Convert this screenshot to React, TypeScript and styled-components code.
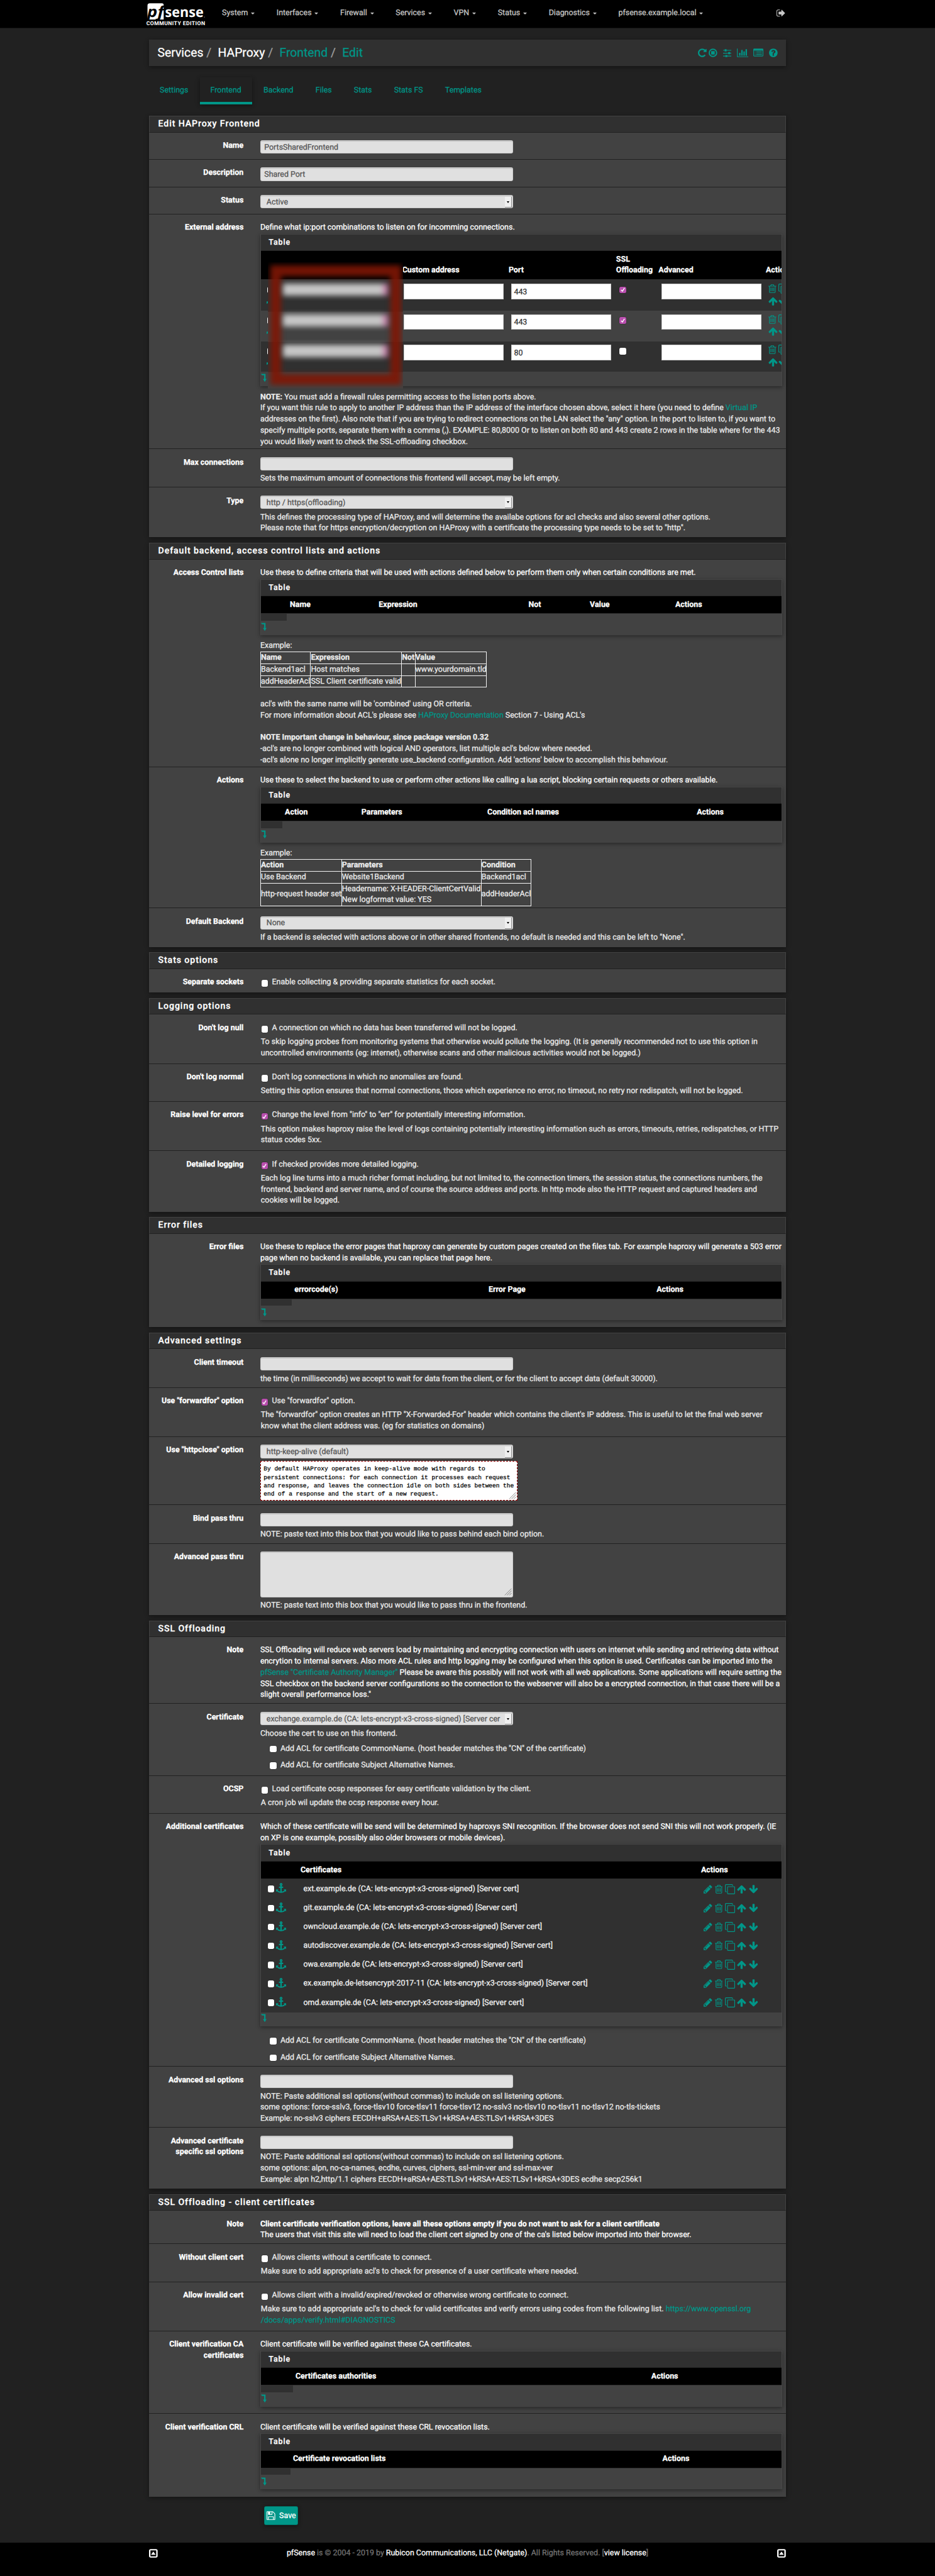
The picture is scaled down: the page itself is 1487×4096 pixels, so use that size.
import React from "react";
import styled, { createGlobalStyle, css } from "styled-components";

const color = {
  page: "#212121",
  panel: "#424242",
  head: "#303030",
  teal: "#009688",
  line: "#212121",
  help: "#ebebeb",
};

const GlobalStyle = createGlobalStyle`
  * { box-sizing: border-box; }
  body { margin: 0; background: #000; overflow-x: hidden; }
`;

const Page = styled.div`
  zoom: 0.8883;
  width: 1674px;
  height: 4611px;
  display: flex;
  flex-direction: column;
  background: ${color.page};
  color: #fff;
  font: 400 14px/20px Roboto, "Liberation Sans", sans-serif;
  -webkit-text-stroke: 0.3px currentColor;
  text-rendering: geometricPrecision;
  white-space: nowrap;
  overflow: hidden;
`;

/* ---------- icons ---------- */

type IconName =
  | "trash" | "up" | "down" | "pencil" | "sliders" | "repeat" | "chart" | "list"
  | "help" | "signout" | "clone" | "anchor" | "stop" | "floppy" | "caretbox";

const ICONS: Record<IconName, { x: number; w: number; d: string }> = {
  trash: { x: 192, w: 1408, d: "M704 736v576q0 14-9 23t-23 9h-64q-14 0-23-9t-9-23v-576q0-14 9-23t23-9h64q14 0 23 9t9 23zm256 0v576q0 14-9 23t-23 9h-64q-14 0-23-9t-9-23v-576q0-14 9-23t23-9h64q14 0 23 9t9 23zm256 0v576q0 14-9 23t-23 9h-64q-14 0-23-9t-9-23v-576q0-14 9-23t23-9h64q14 0 23 9t9 23zm128 724v-948h-896v948q0 22 7 40.5t14.5 27 10.5 8.5h832q3 0 10.5-8.5t14.5-27 7-40.5zm-672-1076h448l-48-117q-7-9-17-11h-317q-10 2-17 11zm928 32v64q0 14-9 23t-23 9h-96v948q0 83-47 143.5t-113 60.5h-832q-66 0-113-58.5t-47-141.5v-952h-96q-14 0-23-9t-9-23v-64q0-14 9-23t23-9h309l70-167q15-37 54-63t79-26h320q40 0 79 26t54 63l70 167h309q14 0 23 9t9 23z" },
  up: { x: 64, w: 1664, d: "M1675 971q0 51-37 90l-75 75q-38 38-91 38-54 0-90-38l-294-293v704q0 52-37.5 84.5t-90.5 32.5h-128q-53 0-90.5-32.5t-37.5-84.5v-704l-294 293q-36 38-90 38t-90-38l-75-75q-38-38-38-90 0-53 38-91l651-651q35-37 90-37 54 0 91 37l651 651q37 39 37 91z" },
  down: { x: 64, w: 1664, d: "M1675 832q0 53-37 90l-651 652q-39 37-91 37-53 0-90-37l-651-652q-38-36-38-90 0-53 38-91l74-75q39-37 91-37 53 0 90 37l294 294v-704q0-52 38-90t90-38h128q52 0 90 38t38 90v704l294-294q37-37 90-37 52 0 91 37l75 75q37 39 37 91z" },
  pencil: { x: 128, w: 1536, d: "M491 1536l91-91-235-235-91 91v107h128v128h107zm523-928q0-22-22-22-10 0-17 7l-542 542q-7 7-7 17 0 22 22 22 10 0 17-7l542-542q7-7 7-17zm-54-192l416 416-832 832h-416v-416zm683 96q0 53-37 90l-166 166-416-416 166-165q36-38 90-38 53 0 91 38l235 234q37 39 37 91z" },
  sliders: { x: 128, w: 1536, d: "M480 1408v128h-352v-128h352zm352-128q26 0 45 19t19 45v256q0 26-19 45t-45 19h-256q-26 0-45-19t-19-45v-256q0-26 19-45t45-19h256zm160-384v128h-864v-128h864zm-640-512v128h-224v-128h224zm1312 1024v128h-736v-128h736zm-960-1152q26 0 45 19t19 45v256q0 26-19 45t-45 19h-256q-26 0-45-19t-19-45v-256q0-26 19-45t45-19h256zm640 512q26 0 45 19t19 45v256q0 26-19 45t-45 19h-256q-26 0-45-19t-19-45v-256q0-26 19-45t45-19h256zm320 128v128h-224v-128h224zm0-512v128h-864v-128h864z" },
  repeat: { x: 128, w: 1536, d: "M1664 256v448q0 26-19 45t-45 19h-448q-42 0-59-40-17-39 14-69l138-138q-148-137-349-137-104 0-198.5 40.5t-163.5 109.5-109.5 163.5-40.5 198.5 40.5 198.5 109.5 163.5 163.5 109.5 198.5 40.5q119 0 225-52t179-147q7-10 23-12 15 0 25 9l137 138q9 8 9.5 20.5t-7.5 22.5q-109 132-264 204.5t-327 72.5q-156 0-298-61t-245-164-164-245-61-298 61-298 164-245 245-164 298-61q147 0 284.5 55.5t244.5 156.5l130-129q29-31 70-14 39 17 39 59z" },
  chart: { x: 0, w: 2048, d: "M640 896v512h-256v-512h256zm384-512v1024h-256v-1024h256zm1024 1152v128h-2048v-1536h128v1408h1920zm-640-896v768h-256v-768h256zm384-384v1152h-256v-1152h256z" },
  list: { x: 0, w: 1792, d: "M256 1120h128v128h-128zM256 864h128v128h-128zM256 608h128v128h-128zM512 1120h1024v128h-1024zM512 864h1024v128h-1024zM512 608h1024v128h-1024zM160 128h1472q66 0 113 47t47 113v1088q0 66-47 113t-113 47h-1472q-66 0-113-47t-47-113v-1088q0-66 47-113t113-47zM128 512v864q0 32 32 32h1472q32 0 32-32v-864z" },
  help: { x: 128, w: 1536, d: "M1024 1376v-192q0-14-9-23t-23-9h-192q-14 0-23 9t-9 23v192q0 14 9 23t23 9h192q14 0 23-9t9-23zm256-672q0-88-55.5-163t-138.5-116-170-41q-243 0-371 213-15 24 8 42l132 100q7 6 19 6 16 0 25-12 53-68 86-92 34-24 86-24 48 0 85.5 26t37.5 59q0 38-20 61t-68 45q-63 28-115.5 86.5t-52.5 125.5v36q0 14 9 23t23 9h192q14 0 23-9t9-23q0-19 21.5-49.5t54.5-49.5q32-18 49-28.5t46-35 44.5-48 28-60.5 12.5-81zm384 192q0 209-103 385.5t-279.5 279.5-385.5 103-385.5-103-279.5-279.5-103-385.5 103-385.5 279.5-279.5 385.5-103 385.5 103 279.5 279.5 103 385.5z" },
  signout: { x: 80, w: 1600, d: "M704 1440q0 4 1 20t.5 26.5-3 23.5-10 19.5-20.5 6.5h-320q-119 0-203.5-84.5t-84.5-203.5v-704q0-119 84.5-203.5t203.5-84.5h320q13 0 22.5 9.5t9.5 22.5q0 4 1 20t.5 26.5-3 23.5-10 19.5-20.5 6.5h-320q-66 0-113 47t-47 113v704q0 66 47 113t113 47h312l11.5 1 11.5 3 8 5.5 7 9 2 13.5zm928-544q0 26-19 45l-544 544q-19 19-45 19t-45-19-19-45v-288h-448q-26 0-45-19t-19-45v-384q0-26 19-45t45-19h448v-288q0-26 19-45t45-19 45 19l544 544q19 19 19 45z" },
  clone: { x: 0, w: 1792, d: "M1664 1632v-1088q0-13-9.5-22.5t-22.5-9.5h-1088q-13 0-22.5 9.5t-9.5 22.5v1088q0 13 9.5 22.5t22.5 9.5h1088q13 0 22.5-9.5t9.5-22.5zm128-1088v1088q0 66-47 113t-113 47h-1088q-66 0-113-47t-47-113v-1088q0-66 47-113t113-47h1088q66 0 113 47t47 113zm-384-384v160h-128v-160q0-13-9.5-22.5t-22.5-9.5h-1088q-13 0-22.5 9.5t-9.5 22.5v1088q0 13 9.5 22.5t22.5 9.5h160v128h-160q-66 0-113-47t-47-113v-1088q0-66 47-113t113-47h1088q66 0 113 47t47 113z" },
  anchor: { x: 0, w: 1792, d: "M960 256q0-26-19-45t-45-19-45 19-19 45 19 45 45 19 45-19 19-45zm832 928v352q0 22-20 30-8 2-12 2-12 0-23-9l-93-93q-119 143-318.5 226.5t-429.5 83.5-429.5-83.5-318.5-226.5l-93 93q-9 9-23 9-4 0-12-2-20-8-20-30v-352q0-14 9-23t23-9h352q22 0 30 20 8 19-7 35l-100 100q67 91 189.5 153.5t271.5 82.5v-647h-192q-26 0-45-19t-19-45v-128q0-26 19-45t45-19h192v-163q-58-34-93-92.5t-35-128.5q0-106 75-181t181-75 181 75 75 181q0 70-35 128.5t-93 92.5v163h192q26 0 45 19t19 45v128q0 26-19 45t-45 19h-192v647q149-20 271.5-82.5t189.5-153.5l-100-100q-15-16-7-35 8-20 30-20h352q14 0 23 9t9 23z" },
  stop: { x: 128, w: 1536, d: "M576 576h640v640h-640zM896 352a544 544 0 1 0 0 1088a544 544 0 1 0 0-1088zM896 128a768 768 0 1 1 0 1536a768 768 0 1 1 0-1536z" },
  floppy: { x: 128, w: 1536, d: "M512 1536h768v-384h-768v384zm896 0h128v-896q0-14-10-38.5t-20-34.5l-281-281q-10-10-34-20t-39-10v416q0 40-28 68t-68 28h-576q-40 0-68-28t-28-68v-416h-128v1280h128v-416q0-40 28-68t68-28h832q40 0 68 28t28 68v416zm-384-928v-320q0-13-9.5-22.5t-22.5-9.5h-192q-13 0-22.5 9.5t-9.5 22.5v320q0 13 9.5 22.5t22.5 9.5h192q13 0 22.5-9.5t9.5-22.5zm640 32v928q0 40-28 68t-68 28h-1344q-40 0-68-28t-28-68v-1344q0-40 28-68t68-28h928q40 0 88 20t76 48l280 280q28 28 48 76t20 88z" },
  caretbox: { x: 128, w: 1536, d: "M1240 1140h-688q-60 0-30-60l344-460q30-36 60 0l344 460q30 60-30 60zM384 352v1088h1024v-1088zM416 128h960q120 0 204 84t84 204v960q0 120-84 204t-204 84h-960q-120 0-204-84t-84-204v-960q0-120 84-204t204-84z" },
};

const Svg = styled.svg`
  display: block;
  flex: none;
  fill: currentColor;
`;

const Icon = ({ name, size = 18 }: { name: IconName; size?: number }) => {
  const i = ICONS[name];
  return (
    <Svg width={(i.w / 1792) * size} height={size} viewBox={`${i.x} 0 ${i.w} 1792`} fillRule="evenodd">
      <path d={i.d} />
    </Svg>
  );
};

const AddSvg = styled(Svg)`
  color: ${color.teal};
  margin-top: 3px;
`;
const AddRow = () => (
  <AddSvg width="10" height="15" viewBox="0 0 10 15">
    <path d="M0 .5H8.2V9.5H10.2L6.9 15 3.6 9.5H5.7V3H1.9Z" />
  </AddSvg>
);

/* ---------- top bar ---------- */

const Navbar = styled.header`
  height: 51px;
  flex: none;
  background: #000;
  border-bottom: 1px solid #101010;
  padding: 0 268px 3px 260px;
  display: flex;
  align-items: center;
  color: #c6c6c6;
`;
const Logo = styled.svg`
  display: block;
  width: 117px;
  height: 50px;
  margin-bottom: -3px;
  flex: none;
`;
const NavItem = styled.a`
  display: flex;
  align-items: center;
  padding: 0 19.5px;
  &:first-of-type { margin-left: 1px; }
  &::after {
    content: "";
    margin-left: 5.5px;
    border: 4px solid transparent;
    border-top-color: currentColor;
    border-bottom: 0;
    margin-top: 1px;
  }
`;
const Push = styled.div`
  margin-left: auto;
`;

const Container = styled.main`
  width: 1140px;
  margin-left: 267px;
  flex: 1;
  display: flex;
  flex-direction: column;
`;

const shadow = css`
  box-shadow: 0 2px 5px rgba(0, 0, 0, 0.26), 0 2px 10px rgba(0, 0, 0, 0.16);
`;

const Breadcrumb = styled.div`
  margin-top: 20px;
  height: 47px;
  flex: none;
  background: ${color.head};
  ${shadow}
  padding: 0 15px;
  display: flex;
  align-items: center;
  font-size: 21.8px;
`;
const Crumb = styled.span<{ $link?: boolean }>`
  color: ${(p) => (p.$link ? color.teal : "#fff")};
  &:not(:last-of-type)::after {
    content: "/";
    color: #9e9e9e;
    padding: 0 11.5px 0 5.5px;
  }
`;
const Shortcuts = styled.div`
  margin-left: auto;
  display: flex;
  gap: 9.5px;
  color: ${color.teal};
  svg:first-child { margin-right: -5.5px; }
`;

const Tabs = styled.nav`
  margin: 20px 0 20px;
  display: flex;
  gap: 1.6px;
  flex: none;
`;
const Tab = styled.a<{ $active?: boolean }>`
  height: 49px;
  padding: 14px 19px 0;
  color: ${color.teal};
  ${(p) => p.$active && css`border-bottom: 5px solid ${color.teal}; ${shadow}`}
`;

/* ---------- panels ---------- */

const Panel = styled.section`
  background: ${color.panel};
  ${shadow}
  margin-bottom: 10px;
  flex: none;
`;
const PanelHead = styled.h2<{ $h?: number }>`
  margin: 0;
  height: ${(p) => p.$h ?? 30}px;
  background: ${color.head};
  border: 1px solid #424242;
  border-bottom: 1px solid ${color.line};
  padding: 4.5px 15px 0;
  font-size: 16px;
  font-weight: 500;
  letter-spacing: 1px;
`;
const Row = styled.div<{ $h: number }>`
  height: ${(p) => p.$h}px;
  display: flex;
  border-bottom: 1px solid ${color.line};
  &:last-child { border-bottom: 0; }
`;
const Label = styled.label`
  width: 190px;
  padding: 14px 21px 0 0;
  text-align: right;
  font-weight: 700;
`;
const Field = styled.div`
  width: 950px;
  padding: 14px 6px 0 9px;
`;
const Text = styled.div``;
const Help = styled.div<{ $top?: number; $left?: number }>`
  color: ${color.help};
  margin-top: ${(p) => p.$top ?? 5}px;
  margin-left: ${(p) => p.$left ?? 0}px;
`;
const Link = styled.a`
  color: ${color.teal};
`;
const FormInput = styled.div<{ $h?: number; $select?: boolean }>`
  width: 453px;
  height: ${(p) => p.$h ?? 24}px;
  background: #e0e0e0;
  border: 1px solid #ccc;
  border-radius: 3px;
  box-shadow: inset 0 1px 1px rgba(0, 0, 0, 0.14);
  color: #555;
  padding: 2px ${(p) => (p.$select ? "1px 0 10px" : "0 0 6px")};
  display: flex;
  justify-content: space-between;
  align-items: ${(p) => (p.$h ? "flex-end" : "flex-start")};
  line-height: 20px;
`;
const SelectText = styled.span`
  width: 421px;
  overflow: hidden;
`;
const SelectButton = styled.span`
  width: 13px;
  height: 20px;
  background: #efefef;
  border: solid #8d8d8d;
  border-width: 0 2px 2px 0;
  display: flex;
  align-items: center;
  justify-content: center;
  &::after {
    content: "";
    border: 2.5px solid transparent;
    border-top: 3.5px solid #000;
    border-bottom: 0;
  }
`;
const Select = ({ children }: { children: React.ReactNode }) => (
  <FormInput $select>
    <SelectText>{children}</SelectText>
    <SelectButton />
  </FormInput>
);

const Box = styled.span<{ $on?: boolean }>`
  width: 12px;
  height: 12px;
  flex: none;
  border-radius: 3px;
  background: ${(p) => (p.$on ? "#b94fae" : "#fff")};
  box-shadow: 0 0 0 0.5px rgba(0, 0, 0, 0.35);
  display: flex;
  align-items: center;
  justify-content: center;
`;
const CheckMark = styled.svg`
  width: 8px;
  height: 8px;
  fill: none;
  stroke: #fff;
  stroke-width: 1.6;
`;
const Checkbox = ({ on }: { on?: boolean }) => (
  <Box $on={on}>
    {on && (
      <CheckMark viewBox="0 0 8 8">
        <path d="M1 4.6L3.2 6.8L7 1" />
      </CheckMark>
    )}
  </Box>
);
const CheckLine = styled.div<{ $sub?: boolean }>`
  display: flex;
  align-items: center;
  gap: 7px;
  color: ${color.help};
  ${(p) => (p.$sub ? "padding: 7px 0 3px 17px;" : "padding-left: 2px;")}
  ${Box} { margin-top: ${(p) => (p.$sub ? 1 : 4)}px; }
`;
const Check = ({ on, sub, children }: { on?: boolean; sub?: boolean; children: React.ReactNode }) => (
  <CheckLine $sub={sub}>
    <Checkbox on={on} />
    <span>{children}</span>
  </CheckLine>
);

/* ---------- inner tables ---------- */

const TablePanel = styled.div<{ $after?: number }>`
  position: relative;
  width: 935px;
  margin: 0.5px 0 ${(p) => p.$after ?? 9}px;
  background: ${color.panel};
  border: solid #484848;
  border-width: 0 1px;
  box-shadow: 0 2px 5px rgba(0, 0, 0, 0.26), 0 2px 10px rgba(0, 0, 0, 0.16);
`;
const TableTitle = styled.div`
  height: 31px;
  background: ${color.head};
  border-bottom: 1px solid #262626;
  border-top: 1px solid #444;
  padding: 5px 15px 0 14px;
  font-weight: 500;
  letter-spacing: 1px;
`;
const HeadRow = styled.div<{ $cols: string; $h?: number }>`
  display: grid;
  grid-template-columns: ${(p) => p.$cols};
  align-items: end;
  height: ${(p) => p.$h ?? 30.5}px;
  padding-bottom: 5px;
  background: #000;
  font-weight: 700;
  overflow: hidden;
`;
const EmptyRow = styled.div<{ $w: number }>`
  height: 14px;
  border-top: 2px solid #303030;
  &::after {
    content: "";
    display: block;
    width: ${(p) => p.$w}px;
    height: 12px;
    background: #303030;
  }
`;
const AddArea = styled.div`
  height: 22px;
`;

const EmptyTable = ({ cols, heads, stub, after }: { cols: string; heads: string[]; stub: number; after?: number }) => (
  <TablePanel $after={after}>
    <TableTitle>Table</TableTitle>
    <HeadRow $cols={cols}>
      <span />
      {heads.map((h) => (
        <span key={h}>{h}</span>
      ))}
    </HeadRow>
    <EmptyRow $w={stub} />
    <AddArea>
      <AddRow />
    </AddArea>
  </TablePanel>
);

const Example = styled.table<{ $w: number }>`
  width: ${(p) => p.$w}px;
  border-collapse: collapse;
  table-layout: fixed;
  margin-top: 0.5px;
  margin-bottom: 20px;
  td, th {
    border: 1px solid #f4f4f4;
    padding: 0;
    text-align: left;
    height: 21px;
    line-height: 20px;
  }
`;
const Col = styled.col<{ $w: number }>`
  width: ${(p) => p.$w}px;
`;

const AddressRow = styled.div<{ $h: number; $dark?: boolean }>`
  display: grid;
  grid-template-columns: 256px 192px 194px 75px 192px 24px;
  height: ${(p) => p.$h}px;
  padding-top: ${(p) => p.$h - 48.5}px;
  background: ${(p) => (p.$dark ? "#303030" : "#424242")};
  overflow: hidden;
`;
const CellInput = styled.span`
  width: 179px;
  height: 28px;
  background: #fff;
  border: 1px solid #ccc;
  color: #333;
  padding: 4px;
  line-height: 20px;
`;
const LeadCell = styled.span`
  padding: 5px 0 0 11px;
  color: ${color.teal};
  svg { margin: 3px 0 0 -1px; }
`;
const CheckCell = styled.span`
  padding: 5px 0 0;
`;
const RowActions = styled.span`
  display: grid;
  grid-template-columns: 18px 20px;
  grid-template-rows: 18px 18px;
  row-gap: 4px;
  color: ${color.teal};
  svg:nth-child(even) { margin-left: 0; }
`;

const Redaction = styled.div`
  position: absolute;
  left: 13px;
  top: 51px;
  width: 241px;
  height: 226px;
  overflow: hidden;
  background: linear-gradient(#000 30px, #303030 31px 88px, #424242 89px 142px, #303030 143px 196px, #424242 197px);
`;
const RedFrame = styled.div`
  position: absolute;
  inset: 6px 3px 7px 4px;
  border: 20px solid rgba(128, 22, 4, 0.9);
  filter: blur(5px);
`;
const BlurredName = styled.div<{ $y: number }>`
  position: absolute;
  left: 27px;
  top: ${(p) => p.$y}px;
  width: 188px;
  height: 22px;
  background: linear-gradient(90deg, #c6c6c6 94%, #c47aa4 97%);
  filter: blur(5px);
`;

const CertRow = styled.div`
  display: flex;
  align-items: center;
  height: 33.9px;
  padding-left: 12px;
  background: #303030;
  color: #f2f2f2;
  svg { color: ${color.teal}; }
`;
const CertName = styled.span`
  margin-left: 31px;
  width: 717px;
`;
const CertActions = styled.span`
  display: flex;
  gap: 4px;
`;
const AnchorSlot = styled.span`
  margin-left: 3px;
  svg { margin-top: -3px; }
`;
const HeadLine = styled.div`
  height: 2px;
  background: #303030;
`;

const Hint = styled.div`
  width: 461px;
  height: 71px;
  margin-top: 5px;
  background: #fff;
  border: 1px dashed #900;
  color: #000;
  font: 400 10.67px/15px "Liberation Mono", monospace;
  padding: 6px 0 0 5px;
  display: flex;
  justify-content: space-between;
`;
const Grip = styled.svg`
  width: 14px;
  height: 14px;
  stroke: #777;
  fill: none;
  align-self: flex-end;
  margin: 0 1px 1px -14px;
`;
const ResizeGrip = () => (
  <Grip viewBox="0 0 14 14">
    <path d="M1 13L13 1M5 13L13 5M9 13L13 9" />
  </Grip>
);

const SaveButton = styled.button`
  margin: 7px 0 0 205.5px;
  width: 61.5px;
  height: 33.5px;
  border: 1px solid #00796b;
  border-radius: 3px;
  background: ${color.teal};
  color: #fff;
  font: inherit;
  padding: 0 3px 0 4px;
  display: flex;
  align-items: center;
  justify-content: space-between;
  ${shadow}
`;

const Footer = styled.footer`
  height: 60px;
  flex: none;
  background: #000;
  color: #757575;
  padding: 9px 267px 0;
  display: flex;
  align-items: flex-start;
  justify-content: space-between;
  svg { color: #fff; margin-top: 1px; }
  b { color: #fff; font-weight: 400; }
`;

const NAV = ["System", "Interfaces", "Firewall", "Services", "VPN", "Status", "Diagnostics", "pfsense.example.local"];
const TABS = ["Settings", "Frontend", "Backend", "Files", "Stats", "Stats FS", "Templates"];
const ADDRESSES = [
  { port: "443", ssl: true, h: 57 },
  { port: "443", ssl: true, h: 54.5 },
  { port: "80", ssl: false, h: 55 },
];
const CERTS = ["ext.example.de", "git.example.de", "owncloud.example.de", "autodiscover.example.de", "owa.example.de", "ex.example.de-letsencrypt-2017-11", "omd.example.de"];

const AclChecks = () => (
  <>
    <Check sub>Add ACL for certificate CommonName. (host header matches the "CN" of the certificate)</Check>
    <Check sub>Add ACL for certificate Subject Alternative Names.</Check>
  </>
);

export default function App() {
  return (
    <Page>
      <GlobalStyle />
      <Navbar>
        <Logo viewBox="0 0 117 50">
          <path d="M8 6H30Q33 6 33 9V35H4V10Q4 6 8 6Z" fill="#fff" />
          <text x="3.5" y="30.5" fontFamily="Open Sans" fontWeight="700" fontStyle="italic" fontSize="27" textLength="30" lengthAdjust="spacingAndGlyphs" fill="#000">pf</text>
          <text x="35.5" y="30.5" fontFamily="Open Sans" fontWeight="700" fontSize="25" textLength="69" lengthAdjust="spacingAndGlyphs" fill="#fff">sense</text>
          <text x="2" y="45" fontFamily="Roboto" fontWeight="700" fontSize="9.8" textLength="105" fill="#fff">COMMUNITY EDITION</text>
          <circle cx="106" cy="30.5" r="0.8" fill="#999" />
        </Logo>
        {NAV.map((n) => (
          <NavItem key={n}>{n}</NavItem>
        ))}
        <Push>
          <Icon name="signout" size={17.5} />
        </Push>
      </Navbar>

      <Container>
        <Breadcrumb>
          <Crumb>Services</Crumb>
          <Crumb>HAProxy</Crumb>
          <Crumb $link>Frontend</Crumb>
          <Crumb $link>Edit</Crumb>
          <Shortcuts>
            <Icon name="repeat" />
            <Icon name="stop" />
            <Icon name="sliders" />
            <Icon name="chart" />
            <Icon name="list" />
            <Icon name="help" />
          </Shortcuts>
        </Breadcrumb>

        <Tabs>
          {TABS.map((t) => (
            <Tab key={t} $active={t === "Frontend"}>{t}</Tab>
          ))}
        </Tabs>

        <Panel>
          <PanelHead>Edit HAProxy Frontend</PanelHead>
          <Row $h={49}>
            <Label>Name</Label>
            <Field><FormInput>PortsSharedFrontend</FormInput></Field>
          </Row>
          <Row $h={49}>
            <Label>Description</Label>
            <Field><FormInput>Shared Port</FormInput></Field>
          </Row>
          <Row $h={49}>
            <Label>Status</Label>
            <Field><Select>Active</Select></Field>
          </Row>
          <Row $h={420}>
            <Label>External address</Label>
            <Field>
              <Text>Define what ip:port combinations to listen on for incomming connections.</Text>
              <TablePanel $after={10}>
                <TableTitle>Table</TableTitle>
                <HeadRow $cols="253px 190.5px 192.5px 76px 192px 29px" $h={50}>
                  <span />
                  <span>Custom address</span>
                  <span>Port</span>
                  <span>SSL<br />Offloading</span>
                  <span>Advanced</span>
                  <span>Actions</span>
                </HeadRow>
                {ADDRESSES.map((a, i) => (
                  <AddressRow key={i} $h={a.h} $dark={i !== 1}>
                    <LeadCell>
                      <Checkbox />
                      <Icon name="anchor" />
                    </LeadCell>
                    <CellInput />
                    <CellInput>{a.port}</CellInput>
                    <CheckCell><Checkbox on={a.ssl} /></CheckCell>
                    <CellInput />
                    <RowActions>
                      <Icon name="trash" />
                      <Icon name="clone" />
                      <Icon name="up" />
                      <Icon name="down" />
                    </RowActions>
                  </AddressRow>
                ))}
                <AddArea><AddRow /></AddArea>
                <Redaction>
                  <RedFrame />
                  <BlurredName $y={38} />
                  <BlurredName $y={93} />
                  <BlurredName $y={148} />
                </Redaction>
              </TablePanel>
              <Help $top={0}>
                <b>NOTE:</b> You must add a firewall rules permitting access to the listen ports above.<br />
                If you want this rule to apply to another IP address than the IP address of the interface chosen above, select it here (you need to define <Link>Virtual IP</Link><br />
                addresses on the first). Also note that if you are trying to redirect connections on the LAN select the "any" option. In the port to listen to, if you want to<br />
                specify multiple ports, separate them with a comma (,). EXAMPLE: 80,8000 Or to listen on both 80 and 443 create 2 rows in the table where for the 443<br />
                you would likely want to check the SSL-offloading checkbox.
              </Help>
            </Field>
          </Row>
          <Row $h={69}>
            <Label>Max connections</Label>
            <Field>
              <FormInput />
              <Help>Sets the maximum amount of connections this frontend will accept, may be left empty.</Help>
            </Field>
          </Row>
          <Row $h={89}>
            <Label>Type</Label>
            <Field>
              <Select>http / https(offloading)</Select>
              <Help>
                This defines the processing type of HAProxy, and will determine the availabe options for acl checks and also several other options.<br />
                Please note that for https encryption/decryption on HAProxy with a certificate the processing type needs to be set to "http".
              </Help>
            </Field>
          </Row>
        </Panel>

        <Panel>
          <PanelHead>Default backend, access control lists and actions</PanelHead>
          <Row $h={371.5}>
            <Label>Access Control lists</Label>
            <Field>
              <Text>Use these to define criteria that will be used with actions defined below to perform them only when certain conditions are met.</Text>
              <EmptyTable cols="52px 159px 268px 110px 153px 1fr" heads={["Name", "Expression", "Not", "Value", "Actions"]} stub={46.5} />
              <Help $top={0}>
                Example:
                <Example $w={405}>
                  <colgroup><Col $w={89.5} /><Col $w={163} /><Col $w={24} /><Col $w={128} /></colgroup>
                  <tbody>
                    <tr><th>Name</th><th>Expression</th><th>Not</th><th>Value</th></tr>
                    <tr><td>Backend1acl</td><td>Host matches</td><td /><td>www.yourdomain.tld</td></tr>
                    <tr><td>addHeaderAcl</td><td>SSL Client certificate valid</td><td /><td /></tr>
                  </tbody>
                </Example>
                acl's with the same name will be 'combined' using OR criteria.<br />
                For more information about ACL's please see <Link>HAProxy Documentation</Link> Section 7 - Using ACL's<br />
                <br />
                <b>NOTE Important change in behaviour, since package version 0.32</b><br />
                -acl's are no longer combined with logical AND operators, list multiple acl's below where needed.<br />
                -acl's alone no longer implicitly generate use_backend configuration. Add 'actions' below to accomplish this behaviour.
              </Help>
            </Field>
          </Row>
          <Row $h={252.5}>
            <Label>Actions</Label>
            <Field>
              <Text>Use these to select the backend to use or perform other actions like calling a lua script, blocking certain requests or others available.</Text>
              <EmptyTable cols="43px 137px 225.5px 375px 1fr" heads={["Action", "Parameters", "Condition acl names", "Actions"]} stub={38} />
              <Help $top={0}>
                Example:
                <Example $w={485}>
                  <colgroup><Col $w={145} /><Col $w={250} /><Col $w={89} /></colgroup>
                  <tbody>
                    <tr><th>Action</th><th>Parameters</th><th>Condition</th></tr>
                    <tr><td>Use Backend</td><td>Website1Backend</td><td>Backend1acl</td></tr>
                    <tr><td>http-request header set</td><td>Headername: X-HEADER-ClientCertValid<br />New logformat value: YES</td><td>addHeaderAcl</td></tr>
                  </tbody>
                </Example>
              </Help>
            </Field>
          </Row>
          <Row $h={69}>
            <Label>Default Backend</Label>
            <Field>
              <Select>None</Select>
              <Help>If a backend is selected with actions above or in other shared frontends, no default is needed and this can be left to "None".</Help>
            </Field>
          </Row>
        </Panel>

        <Panel>
          <PanelHead $h={29.5}>Stats options</PanelHead>
          <Row $h={42.5}>
            <Label>Separate sockets</Label>
            <Field><Check>Enable collecting &amp; providing separate statistics for each socket.</Check></Field>
          </Row>
        </Panel>

        <Panel>
          <PanelHead $h={29.5}>Logging options</PanelHead>
          <Row $h={88}>
            <Label>Don't log null</Label>
            <Field>
              <Check>A connection on which no data has been transferred will not be logged.</Check>
              <Help $left={1}>
                To skip logging probes from monitoring systems that otherwise would pollute the logging. (It is generally recommended not to use this option in<br />
                uncontrolled environments (eg: internet), otherwise scans and other malicious activities would not be logged.)
              </Help>
            </Field>
          </Row>
          <Row $h={68}>
            <Label>Don't log normal</Label>
            <Field>
              <Check>Don't log connections in which no anomalies are found.</Check>
              <Help $left={1}>Setting this option ensures that normal connections, those which experience no error, no timeout, no retry nor redispatch, will not be logged.</Help>
            </Field>
          </Row>
          <Row $h={88}>
            <Label>Raise level for errors</Label>
            <Field>
              <Check on>Change the level from "info" to "err" for potentially interesting information.</Check>
              <Help $left={1}>
                This option makes haproxy raise the level of logs containing potentially interesting information such as errors, timeouts, retries, redispatches, or HTTP<br />
                status codes 5xx.
              </Help>
            </Field>
          </Row>
          <Row $h={108.5}>
            <Label>Detailed logging</Label>
            <Field>
              <Check on>If checked provides more detailed logging.</Check>
              <Help $left={1}>
                Each log line turns into a much richer format including, but not limited to, the connection timers, the session status, the connections numbers, the<br />
                frontend, backend and server name, and of course the source address and ports. In http mode also the HTTP request and captured headers and<br />
                cookies will be logged.
              </Help>
            </Field>
          </Row>
        </Panel>

        <Panel>
          <PanelHead $h={29.5}>Error files</PanelHead>
          <Row $h={167.5}>
            <Label>Error files</Label>
            <Field>
              <Text>
                Use these to replace the error pages that haproxy can generate by custom pages created on the files tab. For example haproxy will generate a 503 error<br />
                page when no backend is available, you can replace that page here.
              </Text>
              <EmptyTable cols="60px 347.5px 301px 1fr" heads={["errorcode(s)", "Error Page", "Actions"]} stub={55} />
            </Field>
          </Row>
        </Panel>

        <Panel>
          <PanelHead $h={29.5}>Advanced settings</PanelHead>
          <Row $h={69}>
            <Label>Client timeout</Label>
            <Field>
              <FormInput />
              <Help>the time (in milliseconds) we accept to wait for data from the client, or for the client to accept data (default 30000).</Help>
            </Field>
          </Row>
          <Row $h={88}>
            <Label>Use "forwardfor" option</Label>
            <Field>
              <Check on>Use "forwardfor" option.</Check>
              <Help $left={1}>
                The "forwardfor" option creates an HTTP "X-Forwarded-For" header which contains the client's IP address. This is useful to let the final web server<br />
                know what the client address was. (eg for statistics on domains)
              </Help>
            </Field>
          </Row>
          <Row $h={122}>
            <Label>Use "httpclose" option</Label>
            <Field>
              <Select>http-keep-alive (default)</Select>
              <Hint>
                <span>
                  By default HAProxy operates in keep-alive mode with regards to<br />
                  persistent connections: for each connection it processes each request<br />
                  and response, and leaves the connection idle on both sides between the<br />
                  end of a response and the start of a new request.
                </span>
                <ResizeGrip />
              </Hint>
            </Field>
          </Row>
          <Row $h={69}>
            <Label>Bind pass thru</Label>
            <Field>
              <FormInput />
              <Help>NOTE: paste text into this box that you would like to pass behind each bind option.</Help>
            </Field>
          </Row>
          <Row $h={127.5}>
            <Label>Advanced pass thru</Label>
            <Field>
              <FormInput $h={82}><span /><ResizeGrip /></FormInput>
              <Help>NOTE: paste text into this box that you would like to pass thru in the frontend.</Help>
            </Field>
          </Row>
        </Panel>

        <Panel>
          <PanelHead $h={29.5}>SSL Offloading</PanelHead>
          <Row $h={120}>
            <Label>Note</Label>
            <Field>
              <Text>
                SSL Offloading will reduce web servers load by maintaining and encrypting connection with users on internet while sending and retrieving data without<br />
                encrytion to internal servers. Also more ACL rules and http logging may be configured when this option is used. Certificates can be imported into the<br />
                <Link>pfSense "Certificate Authority Manager"</Link> Please be aware this possibly will not work with all web applications. Some applications will require setting the<br />
                SSL checkbox on the backend server configurations so the connection to the webserver will also be a encrypted connection, in that case there will be a<br />
                slight overall performance loss."
              </Text>
            </Field>
          </Row>
          <Row $h={128.5}>
            <Label>Certificate</Label>
            <Field>
              <Select>exchange.example.de (CA: lets-encrypt-x3-cross-signed) [Server cer</Select>
              <Text as={Help}>Choose the cert to use on this frontend.</Text>
              <AclChecks />
            </Field>
          </Row>
          <Row $h={68}>
            <Label>OCSP</Label>
            <Field>
              <Check>Load certificate ocsp responses for easy certificate validation by the client.</Check>
              <Help $left={1}>A cron job wil update the ocsp response every hour.</Help>
            </Field>
          </Row>
          <Row $h={453}>
            <Label>Additional certificates</Label>
            <Field>
              <Text>
                Which of these certificate will be send will be determined by haproxys SNI recognition. If the browser does not send SNI this will not work properly. (IE<br />
                on XP is one example, possibly also older browsers or mobile devices).
              </Text>
              <TablePanel $after={9}>
                <TableTitle>Table</TableTitle>
                <HeadRow $cols="71px 717px 1fr">
                  <span />
                  <span>Certificates</span>
                  <span>Actions</span>
                </HeadRow>
                <HeadLine />
                {CERTS.map((c) => (
                  <CertRow key={c}>
                    <Checkbox />
                    <AnchorSlot><Icon name="anchor" /></AnchorSlot>
                    <CertName>{c} (CA: lets-encrypt-x3-cross-signed) [Server cert]</CertName>
                    <CertActions>
                      <Icon name="pencil" />
                      <Icon name="trash" />
                      <Icon name="clone" />
                      <Icon name="up" />
                      <Icon name="down" />
                    </CertActions>
                  </CertRow>
                ))}
                <AddArea><AddRow /></AddArea>
              </TablePanel>
              <AclChecks />
            </Field>
          </Row>
          <Row $h={109}>
            <Label>Advanced ssl options</Label>
            <Field>
              <FormInput />
              <Help>
                NOTE: Paste additional ssl options(without commas) to include on ssl listening options.<br />
                some options: force-sslv3, force-tlsv10 force-tlsv11 force-tlsv12 no-sslv3 no-tlsv10 no-tlsv11 no-tlsv12 no-tls-tickets<br />
                Example: no-sslv3 ciphers EECDH+aRSA+AES:TLSv1+kRSA+AES:TLSv1+kRSA+3DES
              </Help>
            </Field>
          </Row>
          <Row $h={109}>
            <Label>Advanced certificate<br />specific ssl options</Label>
            <Field>
              <FormInput />
              <Help>
                NOTE: Paste additional ssl options(without commas) to include on ssl listening options.<br />
                some options: alpn, no-ca-names, ecdhe, curves, ciphers, ssl-min-ver and ssl-max-ver<br />
                Example: alpn h2,http/1.1 ciphers EECDH+aRSA+AES:TLSv1+kRSA+AES:TLSv1+kRSA+3DES ecdhe secp256k1
              </Help>
            </Field>
          </Row>
        </Panel>

        <Panel>
          <PanelHead $h={29.5}>SSL Offloading - client certificates</PanelHead>
          <Row $h={60}>
            <Label>Note</Label>
            <Field>
              <Text>
                <b>Client certificate verification options, leave all these options empty if you do not want to ask for a client certificate</b><br />
                The users that visit this site will need to load the client cert signed by one of the ca's listed below imported into their browser.
              </Text>
            </Field>
          </Row>
          <Row $h={68}>
            <Label>Without client cert</Label>
            <Field>
              <Check>Allows clients without a certificate to connect.</Check>
              <Help $left={1}>Make sure to add appropriate acl's to check for presence of a user certificate where needed.</Help>
            </Field>
          </Row>
          <Row $h={88}>
            <Label>Allow invalid cert</Label>
            <Field>
              <Check>Allows client with a invalid/expired/revoked or otherwise wrong certificate to connect.</Check>
              <Help $left={1}>
                Make sure to add appropriate acl's to check for valid certificates and verify errors using codes from the following list. <Link>https://www.openssl.org<br />/docs/apps/verify.html#DIAGNOSTICS</Link>
              </Help>
            </Field>
          </Row>
          <Row $h={148}>
            <Label>Client verification CA<br />certificates</Label>
            <Field>
              <Text>Client certificate will be verified against these CA certificates.</Text>
              <EmptyTable cols="62px 637px 1fr" heads={["Certificates authorities", "Actions"]} stub={58} />
            </Field>
          </Row>
          <Row $h={148}>
            <Label>Client verification CRL</Label>
            <Field>
              <Text>Client certificate will be verified against these CRL revocation lists.</Text>
              <EmptyTable cols="57.5px 661.5px 1fr" heads={["Certificate revocation lists", "Actions"]} stub={52.5} />
            </Field>
          </Row>
        </Panel>

        <SaveButton>
          <Icon name="floppy" />
          <span>Save</span>
        </SaveButton>
      </Container>

      <Footer>
        <Icon name="caretbox" />
        <span>
          <b>pfSense</b> is © 2004 - 2019 by <b>Rubicon Communications, LLC (Netgate)</b>. All Rights Reserved. [<b>view license</b>]
        </span>
        <Icon name="caretbox" />
      </Footer>
    </Page>
  );
}
